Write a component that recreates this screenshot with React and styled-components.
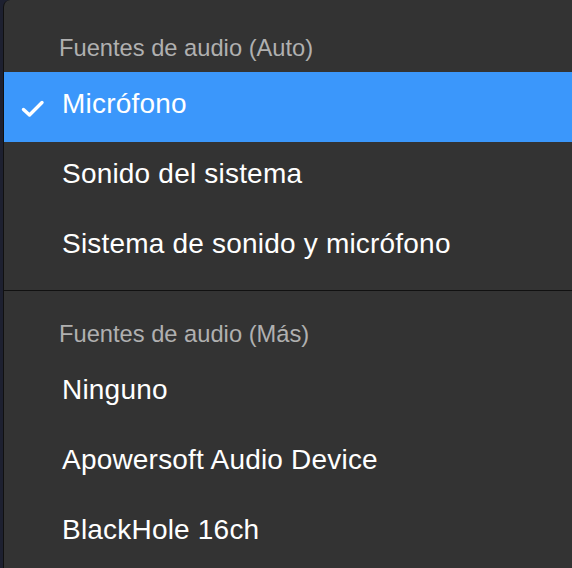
import React, { useState } from 'react';
import styled, { createGlobalStyle } from 'styled-components';

const GlobalStyle = createGlobalStyle`
  html, body {
    margin: 0;
    padding: 0;
    height: 100%;
    background: #1d2030;
  }
  #root {
    height: 100%;
  }
`;

const sections = [
  {
    title: 'Fuentes de audio (Auto)',
    items: ['Micrófono', 'Sonido del sistema', 'Sistema de sonido y micrófono'],
  },
  {
    title: 'Fuentes de audio (Más)',
    items: ['Ninguno', 'Apowersoft Audio Device', 'BlackHole 16ch'],
  },
];

const CheckIcon = () => (
  <svg width="24" height="18" viewBox="0 0 24 18">
    <path
      d="M2.5 9.5 L8.5 15 L21 2.5"
      fill="none"
      stroke="#fff"
      strokeWidth="3.4"
      strokeLinecap="round"
      strokeLinejoin="round"
    />
  </svg>
);

const App = () => {
  const [selected, setSelected] = useState('Micrófono');

  return (
    <>
      <GlobalStyle />
      <Menu>
        {sections.map((section, i) => (
          <React.Fragment key={section.title}>
            {i > 0 && <Separator />}
            <Header>{section.title}</Header>
            {section.items.map((item) => (
              <Item
                key={item}
                $active={item === selected}
                onClick={() => setSelected(item)}
              >
                <CheckSlot>{item === selected && <CheckIcon />}</CheckSlot>
                <Label>{item}</Label>
              </Item>
            ))}
          </React.Fragment>
        ))}
      </Menu>
    </>
  );
};

export default App;

const Menu = styled.div`
  margin-left: 3px;
  min-height: 100%;
  box-sizing: border-box;
  padding-top: 26px;
  background: #333333;
  border-left: 1px solid #101010;
  border-top-left-radius: 7px;
  font-family: 'Liberation Sans', Arial, sans-serif;
`;

const Header = styled.div`
  height: 46px;
  box-sizing: border-box;
  padding: 0 0 2px 55px;
  display: flex;
  align-items: center;
  font-size: 23.7px;
  color: #b0b0b0;
`;

const Item = styled.div`
  height: 70px;
  box-sizing: border-box;
  padding-bottom: 6px;
  display: flex;
  align-items: center;
  background: ${({ $active }) => ($active ? '#3b97fb' : 'transparent')};
  color: #ffffff;
  cursor: default;
`;

const CheckSlot = styled.div`
  width: 58px;
  display: flex;
  justify-content: flex-start;
  padding-left: 17px;
  padding-top: 9px;
  box-sizing: border-box;
`;

const Label = styled.span`
  font-size: 28px;
  letter-spacing: 0.2px;
`;

const Separator = styled.div`
  height: 1px;
  margin: 8px 0 21px;
  background: #111111;
`;
